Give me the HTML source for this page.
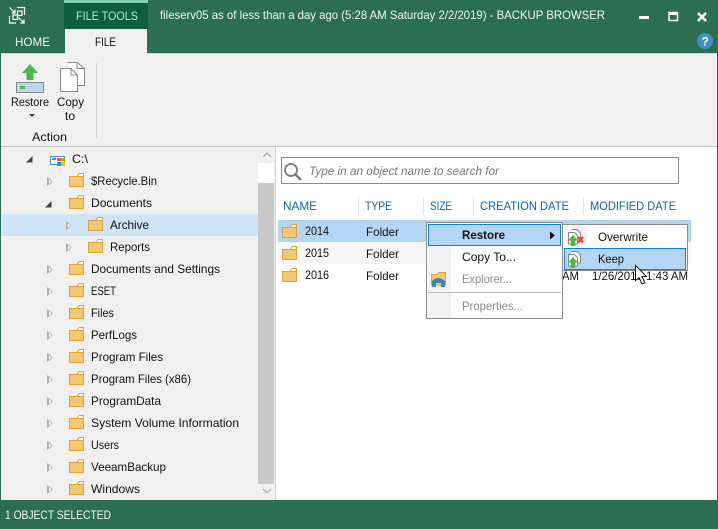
<!DOCTYPE html>
<html><head><meta charset="utf-8"><title>Backup Browser</title>
<style>
html,body{margin:0;padding:0;background:#fff;width:718px;height:529px;overflow:hidden}
svg{display:block}
text{font-family:"Liberation Sans",sans-serif;font-size:12px;fill:#111;white-space:pre}
.g{fill:#8a8a8a}
.h{fill:#0a67b0}
.w{fill:#f2f7f4}
</style></head><body>
<svg width="718" height="529" viewBox="0 0 718 529" xmlns="http://www.w3.org/2000/svg">
<defs>
<g id="f"><path d="M8 3.500L10 0.500H14.500V3.500Z" fill="#fff" stroke="#e2a332"/><path d="M0.500 3.500H14.500V13.500H0.500Z" fill="#f3c873" stroke="#e2a332"/></g>
<g id="c"><path d="M0 0L2.500 2V7L0 9Z" fill="#b0b0b0"/><path d="M2 1.500L5 4.500L2 7.500" fill="#f8f8f8" stroke="#c0c0c0"/></g>
<path id="e" d="M6.500 0V6.500H0Z" fill="#444"/>
<path id="u" d="M5 0L10 5.500H7.300V11H2.700V5.500H0Z" fill="#4cb848"/>
</defs>
<!-- frame -->
<rect width="718" height="529" fill="#2b6e51"/>
<rect x="1" y="53" width="716" height="447" fill="#f0f0f0"/>
<rect x="1" y="146" width="716" height="1" fill="#c6c6c6"/>
<rect x="276" y="147" width="441" height="353" fill="#fff"/>
<rect x="275" y="147" width="1" height="353" fill="#d0d0d0"/>
<rect x="1" y="53" width="64" height="1" fill="#c8d4ce"/>
<rect x="147" y="53" width="570" height="1" fill="#c8d4ce"/>
<!-- title bar -->
<g fill="none" stroke="#fff" stroke-width="1.200">
<path d="M17 7.500H24.500V15M9.500 16V23H16"/>
<rect x="17.500" y="11" width="4.500" height="4.500"/>
<rect x="13" y="15" width="4.500" height="4.500"/>
<path d="M9.500 7.500L15 13M15 9.500V13H11.500M18.500 17.500L24 23M24 19.500V23H20.500"/>
</g>
<rect x="64" y="0" width="84" height="3" fill="#82cfae"/>
<rect x="64" y="3" width="84" height="26" fill="#0f5f3e"/>
<rect x="65" y="29" width="82" height="25" fill="#f0f0f0"/>
<text x="76" y="20" textLength="62" lengthAdjust="spacingAndGlyphs" style="fill:#a8efce">FILE TOOLS</text>
<text x="15" y="46" textLength="35" lengthAdjust="spacingAndGlyphs" class="w">HOME</text>
<text x="95" y="46" textLength="21" lengthAdjust="spacingAndGlyphs">FILE</text>
<text x="160" y="19" textLength="445" lengthAdjust="spacingAndGlyphs" class="w">fileserv05 as of less than a day ago (5:28 AM Saturday 2/2/2019) - BACKUP BROWSER</text>
<rect x="639" y="16" width="10" height="3" fill="#fff"/>
<path d="M669 12.500H677.500V20.500H669Z" fill="none" stroke="#fff" stroke-width="1.500"/><rect x="669" y="12" width="9" height="3" fill="#fff"/>
<path d="M698 13L706 21M706 13L698 21" stroke="#fff" stroke-width="2.600"/>
<circle cx="705" cy="41" r="8" fill="#3f8ec9"/>
<text x="701.500" y="45.500" style="fill:#fff;font-weight:bold;font-size:12px">?</text>
<!-- ribbon -->
<path d="M30 64L38 73H33.500V80H26.500V73H22Z" fill="#4cb848"/>
<rect x="16.500" y="82.500" width="27" height="10" fill="#bdd6ee" stroke="#8a8a8a"/>
<rect x="20" y="86" width="5" height="3" fill="#4cb848"/>
<text x="11" y="106" textLength="38" lengthAdjust="spacingAndGlyphs">Restore</text>
<path d="M29 114H35L32 117Z" fill="#444"/>
<g transform="translate(60,62)"><path d="M7.500 0.500H17L24.500 6.500V23.500H18" fill="#fff" stroke="#888"/><path d="M17 .5V6.500H24.500" fill="none" stroke="#888"/><path d="M0.500 6.500H11L17.500 13V29.500H0.500Z" fill="#fff" stroke="#888"/><path d="M11 6.500V13H17.500" fill="none" stroke="#888"/></g>
<text x="57" y="106" textLength="27" lengthAdjust="spacingAndGlyphs">Copy</text>
<text x="65" y="120">to</text>
<text x="32" y="141" textLength="35" lengthAdjust="spacingAndGlyphs">Action</text>
<rect x="96" y="63" width="1" height="75" fill="#d4d4d4"/>
<!-- tree -->
<rect x="1" y="214" width="257" height="22" fill="#cfe4f8"/>
<rect x="258" y="147" width="17" height="353" fill="#f0f0f0"/>
<rect x="258" y="163" width="16" height="20" fill="#fff"/>
<rect x="258" y="183" width="16" height="301" fill="#c8c8c8"/>
<path d="M263 157L267 153L271 157M263 489L267 493L271 489" fill="none" stroke="#a8a8a8" stroke-width="1.200"/>
<use href="#e" x="26" y="156"/>
<rect x="50.500" y="156.500" width="14" height="8" fill="#fff" stroke="#4a90d0"/>
<rect x="52" y="158" width="4" height="2" fill="#4a90d0"/>
<rect x="57" y="158" width="4" height="3" fill="#ef5a28"/><rect x="61" y="158" width="4" height="3" fill="#7fba00"/>
<rect x="57" y="162" width="4" height="4" fill="#00a4ef"/><rect x="61" y="162" width="4" height="4" fill="#ffb900"/>
<text x="72" y="163" textLength="16" lengthAdjust="spacingAndGlyphs">C:\</text>
<use href="#c" x="47" y="177"/><use href="#f" x="69" y="173"/><text x="91" y="185" textLength="66" lengthAdjust="spacingAndGlyphs">$Recycle.Bin</text>
<use href="#e" x="45" y="201"/><use href="#f" x="69" y="195"/><text x="91" y="207" textLength="61" lengthAdjust="spacingAndGlyphs">Documents</text>
<use href="#c" x="66" y="221"/><use href="#f" x="88" y="217"/><text x="110" y="229" textLength="39" lengthAdjust="spacingAndGlyphs">Archive</text>
<use href="#c" x="66" y="243"/><use href="#f" x="88" y="239"/><text x="110" y="251" textLength="40" lengthAdjust="spacingAndGlyphs">Reports</text>
<use href="#c" x="47" y="265"/><use href="#f" x="69" y="261"/><text x="91" y="273" textLength="129" lengthAdjust="spacingAndGlyphs">Documents and Settings</text>
<use href="#c" x="47" y="287"/><use href="#f" x="69" y="283"/><text x="91" y="295" textLength="25" lengthAdjust="spacingAndGlyphs">ESET</text>
<use href="#c" x="47" y="309"/><use href="#f" x="69" y="305"/><text x="91" y="317" textLength="23" lengthAdjust="spacingAndGlyphs">Files</text>
<use href="#c" x="47" y="331"/><use href="#f" x="69" y="327"/><text x="91" y="339" textLength="46" lengthAdjust="spacingAndGlyphs">PerfLogs</text>
<use href="#c" x="47" y="353"/><use href="#f" x="69" y="349"/><text x="91" y="361" textLength="72" lengthAdjust="spacingAndGlyphs">Program Files</text>
<use href="#c" x="47" y="375"/><use href="#f" x="69" y="371"/><text x="91" y="383" textLength="100" lengthAdjust="spacingAndGlyphs">Program Files (x86)</text>
<use href="#c" x="47" y="397"/><use href="#f" x="69" y="393"/><text x="91" y="405" textLength="70" lengthAdjust="spacingAndGlyphs">ProgramData</text>
<use href="#c" x="47" y="419"/><use href="#f" x="69" y="415"/><text x="91" y="427" textLength="148" lengthAdjust="spacingAndGlyphs">System Volume Information</text>
<use href="#c" x="47" y="441"/><use href="#f" x="69" y="437"/><text x="91" y="449" textLength="28" lengthAdjust="spacingAndGlyphs">Users</text>
<use href="#c" x="47" y="463"/><use href="#f" x="69" y="459"/><text x="91" y="471" textLength="75" lengthAdjust="spacingAndGlyphs">VeeamBackup</text>
<use href="#c" x="47" y="485"/><use href="#f" x="69" y="481"/><text x="91" y="493" textLength="49" lengthAdjust="spacingAndGlyphs">Windows</text>
<!-- search -->
<rect x="281.500" y="157.500" width="397" height="26" fill="#fff" stroke="#8a8a8a"/>
<circle cx="291" cy="170" r="6" fill="none" stroke="#7a7a7a" stroke-width="1.800"/>
<path d="M295.500 174.500L301 180" stroke="#7a7a7a" stroke-width="2.400"/>
<text x="309" y="175" textLength="190" lengthAdjust="spacingAndGlyphs" style="font-style:italic;fill:#777">Type in an object name to search for</text>
<!-- headers -->
<text x="283" y="210" textLength="34" lengthAdjust="spacingAndGlyphs" class="h">NAME</text>
<text x="365" y="210" textLength="27" lengthAdjust="spacingAndGlyphs" class="h">TYPE</text>
<text x="430" y="210" textLength="22" lengthAdjust="spacingAndGlyphs" class="h">SIZE</text>
<text x="480" y="210" textLength="89" lengthAdjust="spacingAndGlyphs" class="h">CREATION DATE</text>
<text x="590" y="210" textLength="86" lengthAdjust="spacingAndGlyphs" class="h">MODIFIED DATE</text>
<g fill="#e4e4e4"><rect x="358" y="197" width="1" height="18"/><rect x="423" y="197" width="1" height="18"/><rect x="473" y="197" width="1" height="18"/><rect x="583" y="197" width="1" height="18"/></g>
<!-- rows -->
<rect x="278" y="220" width="413" height="22" fill="#b4d6f6"/>
<rect x="278" y="242" width="413" height="22" fill="#f6f6f6"/>
<use href="#f" x="282" y="224"/><text x="305" y="235" textLength="24" lengthAdjust="spacingAndGlyphs">2014</text><text x="366" y="236" textLength="33" lengthAdjust="spacingAndGlyphs">Folder</text>
<use href="#f" x="282" y="246"/><text x="305" y="257" textLength="24" lengthAdjust="spacingAndGlyphs">2015</text><text x="366" y="258" textLength="33" lengthAdjust="spacingAndGlyphs">Folder</text>
<use href="#f" x="282" y="268"/><text x="305" y="279" textLength="24" lengthAdjust="spacingAndGlyphs">2016</text><text x="366" y="280" textLength="33" lengthAdjust="spacingAndGlyphs">Folder</text>
<text x="562" y="280" textLength="17" lengthAdjust="spacingAndGlyphs">AM</text>
<text x="592" y="280" textLength="96" lengthAdjust="spacingAndGlyphs">1/26/2019 1:43 AM</text>
<!-- context menu -->
<rect x="426.500" y="222.500" width="136" height="96" fill="#fff" stroke="#8a8a8a"/>
<rect x="428" y="224" width="23" height="94" fill="#f3f3f3"/>
<rect x="428.500" y="224.500" width="132" height="21" fill="#b4d6f3" stroke="#0f7fd0"/>
<text x="462" y="239" textLength="43" lengthAdjust="spacingAndGlyphs" style="font-weight:bold">Restore</text>
<path d="M550 231.500L555 235.500L550 239.500Z" fill="#111"/>
<text x="462" y="261" textLength="54" lengthAdjust="spacingAndGlyphs">Copy To...</text>
<text x="462" y="283" textLength="50" lengthAdjust="spacingAndGlyphs" class="g">Explorer...</text>
<rect x="428" y="292" width="133" height="1" fill="#bdbdbd"/>
<text x="462" y="310" textLength="61" lengthAdjust="spacingAndGlyphs" class="g">Properties...</text>
<path d="M431.500 274.500H437L439 272.500H445.500V285H431.500Z" fill="#f3c873" stroke="#e2a332"/>
<path d="M432 287V281Q438 275 445 281V287H441V283H436V287Z" fill="#3a83c4"/>
<!-- submenu -->
<rect x="562.500" y="224.500" width="125" height="46" fill="#fff" stroke="#8a8a8a"/>
<rect x="564" y="226" width="23" height="21" fill="#f3f3f3"/>
<rect x="564.500" y="248.500" width="121" height="21" fill="#b4d6f3" stroke="#0f7fd0"/>
<g transform="translate(568,229)"><path d="M3.500 .5H9L12.500 4V10M0.500 3.500H6.500L9.500 6.500V15H0.500Z" fill="#fff" stroke="#888"/><use href="#u" x="0" y="6"/><path d="M10 8L15 13.500M15 8L10 13.500" stroke="#e8453c" stroke-width="2.400"/></g>
<text x="598" y="241" textLength="50" lengthAdjust="spacingAndGlyphs">Overwrite</text>
<g transform="translate(568,251)"><path d="M3.500 .5H9L12.500 4V12H9.500M0.500 3.500H6.500L9.500 6.500V15H0.500Z" fill="#fff" stroke="#888"/><use href="#u" x="0" y="6"/></g>
<text x="598" y="263" textLength="26" lengthAdjust="spacingAndGlyphs">Keep</text>
<!-- cursor -->
<path d="M635.500 265.500V280.500L639 277.500L642 284L644.800 282.800L642 276.500H646.500Z" fill="#fff" stroke="#111"/>
<!-- status -->
<rect x="0" y="500" width="718" height="29" fill="#2b6e51"/>
<text x="5" y="519" textLength="106" lengthAdjust="spacingAndGlyphs" class="w">1 OBJECT SELECTED</text>
</svg>
</body></html>
